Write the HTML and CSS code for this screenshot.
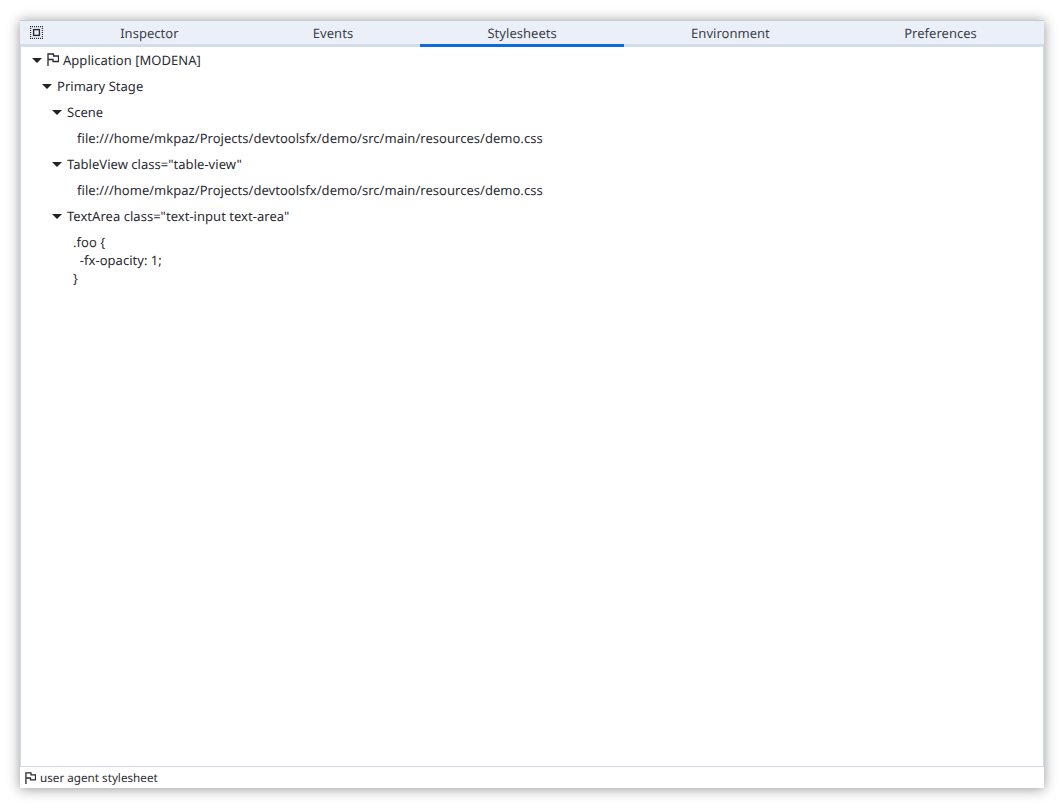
FILE: index.html
```html
<!DOCTYPE html>
<html lang="en">
<head>
<meta charset="utf-8">
<title>DevToolsFX</title>
<link rel="stylesheet" href="styles.css">
</head>
<body>
<div class="window">
  <div class="tabbar">
    <div class="picker">
      <svg width="13" height="13" viewBox="0 0 13 13" class="picker-icon">
        <path d="M0 .6H13M0 12.4H13M.6 0V13M12.4 0V13" fill="none" stroke="#2a2a30" stroke-width="1.2" stroke-dasharray="1 1"/>
        <rect x="3.6" y="3.6" width="5.8" height="5.8" fill="none" stroke="#2a2a30" stroke-width="1.4"/>
      </svg>
    </div>
    <div class="tab">Inspector</div>
    <div class="tab">Events</div>
    <div class="tab active">Stylesheets</div>
    <div class="tab">Environment</div>
    <div class="tab">Preferences</div>
  </div>
  <div class="tree">
    <div class="row lvl0">
      <span class="arrow"></span>
      <svg class="flag tree-flag" width="12" height="13" viewBox="0 0 12 13"><path d="M1 13V1H6.5V3H11.5V8.5H6V6.5H1" fill="none" stroke="#2a2a2e" stroke-width="1.3"/></svg>
      <span>Application [MODENA]</span>
    </div>
    <div class="row lvl1"><span class="arrow"></span><span>Primary Stage</span></div>
    <div class="row lvl2"><span class="arrow"></span><span>Scene</span></div>
    <div class="row lvl3">file:///home/mkpaz/Projects/devtoolsfx/demo/src/main/resources/demo.css</div>
    <div class="row lvl2"><span class="arrow"></span><span>TableView class="table-view"</span></div>
    <div class="row lvl3">file:///home/mkpaz/Projects/devtoolsfx/demo/src/main/resources/demo.css</div>
    <div class="row lvl2"><span class="arrow"></span><span>TextArea class="text-input text-area"</span></div>
    <pre class="code">.foo {
  -fx-opacity: 1;
}</pre>
  </div>
  <div class="status">
    <svg class="flag" width="11" height="12" viewBox="0 0 12 13"><path d="M1 13V1H6.5V3H11.5V8.5H6V6.5H1" fill="none" stroke="#2a2a2e" stroke-width="1.4"/></svg>
    <span>user agent stylesheet</span>
  </div>
</div>
</body>
</html>
```
FILE: styles.css
```css
* { box-sizing: border-box; }
html, body { margin: 0; height: 100%; background: #fff; }
body {
  padding: 20px;
  font-family: "Noto Sans", sans-serif;
  font-size: 13px;
  letter-spacing: 0.03px;
  color: #2b2b33;
  text-rendering: geometricPrecision;
}
.window {
  height: 768px;
  width: 1024px;
  display: flex;
  flex-direction: column;
  background: #fff;
  box-shadow: 0 1px 12px rgba(0, 0, 0, 0.42);
}
.tabbar {
  display: flex;
  height: 27px;
  background: #ebf0f8;
  border-bottom: 3px solid #d2dcec;
  border-top: 1px solid #c9ccd2;
}
.picker { width: 33px; display: flex; align-items: center; justify-content: center; }
.tab {
  flex: 1 1 auto;
  text-align: center;
  line-height: 24px;
  height: 26px;
  border-bottom: 3px solid transparent;
  color: #3a3f4a;
}
.tab.active { border-bottom-color: #0f6bdc; }
.tree {
  flex: 1;
  border-left: 1px solid #d2dcec;
  border-right: 1px solid #d2dcec;
}
.row { display: flex; align-items: center; height: 26px; white-space: pre; }
.lvl0 { padding-left: 11px; }
.lvl1 { padding-left: 21px; }
.lvl2 { padding-left: 31px; }
.lvl3 { padding-left: 56px; }
.arrow {
  width: 0;
  height: 0;
  border-left: 5px solid transparent;
  border-right: 5px solid transparent;
  border-top: 5px solid #222;
  margin-right: 5px;
}
.tree-flag { margin-right: 4px; margin-top: -2px; }
.code {
  margin: 0;
  padding: 4px 0 0 52px;
  font: inherit;
  letter-spacing: inherit;
  line-height: 18px;
}
.status {
  height: 22px;
  display: flex;
  align-items: center;
  gap: 4px;
  padding-left: 5px;
  font-size: 11.7px;
  letter-spacing: 0;
  border-top: 1px solid #d2d8e4;
}
```
